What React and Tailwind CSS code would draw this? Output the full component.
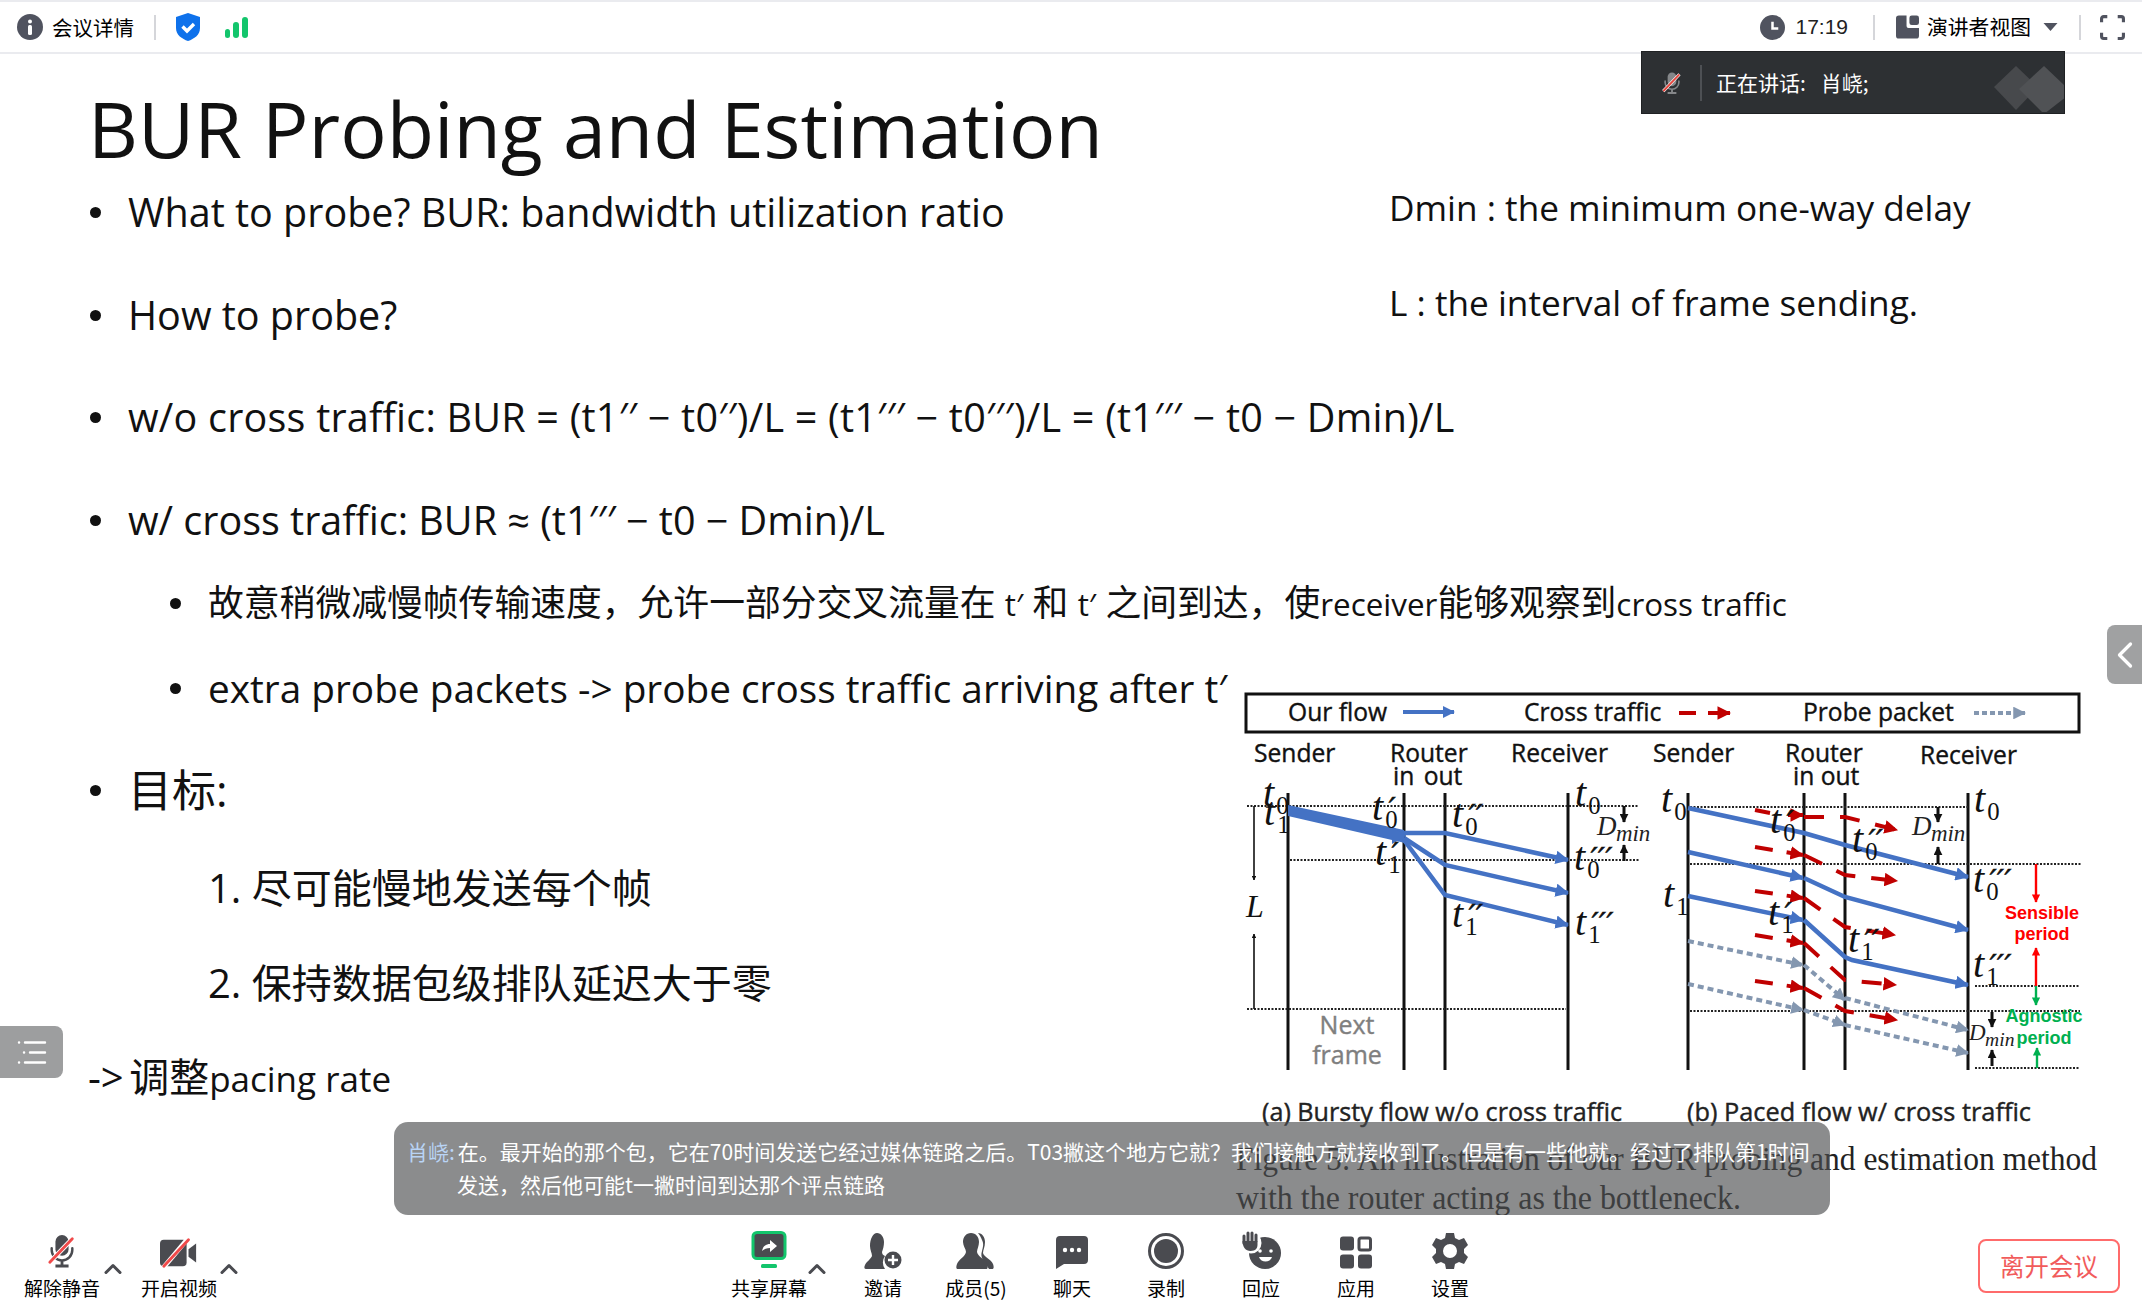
import { ChevronLeft, ChevronUp } from 'lucide-react'

const cjk = '"Noto Sans CJK SC", "Noto Sans", sans-serif'
const slideFont = '"Open Sans", "Noto Sans CJK SC", sans-serif'
const BLUE = '#4472c4'
const RED = '#c00000'
const GREY = '#8497b0'

function MicOff({ className, slash = '#f04a4a', fill = '#4a4b50' }) {
  return (
    <svg viewBox="0 0 32 36" className={className}>
      <rect x="9" y="1" width="14" height="22" rx="7" fill={fill} />
      <path d="M5 15v2a11 11 0 0 0 22 0v-2" fill="none" stroke={fill} strokeWidth="2.6" strokeLinecap="round" />
      <path d="M16 28v5M9 34h14" stroke={fill} strokeWidth="3" />
      <path d="M2 31 28 4" stroke="#fff" strokeWidth="5" />
      <path d="M3 30 27 5" stroke={slash} strokeWidth="3" strokeLinecap="round" />
    </svg>
  )
}

function ToolItem({ label, width, children }) {
  return (
    <div className="flex flex-col items-center shrink-0" style={{ width }}>
      <div className="h-[38px] flex items-end justify-center">{children}</div>
      <span className="mt-[6px] text-[19px] leading-[26px] text-black">{label}</span>
    </div>
  )
}

function Caret() {
  return <ChevronUp className="w-[28px] h-[28px] text-[#4a4b50] mt-[6px] -ml-[11px] mr-[5px] shrink-0" strokeWidth={2.6} />
}

// t with its subscript and prime marks, as in the paper figure
function Tee({ x, y, sub, primes = '', size = 40 }) {
  return (
    <g fontFamily='"Liberation Serif", serif' fill="#111">
      <text x={x} y={y} fontSize={size} fontStyle="italic">t</text>
      <text x={x + size * 0.33} y={y + 8} fontSize={size * 0.62}>{sub}</text>
      {primes && (
        <text
          x={x + size * 0.42}
          y={y - 1}
          fontSize="30"
          fontStyle="italic"
          fontFamily='"DejaVu Sans", sans-serif'
          letterSpacing="0.5"
          stroke="#111"
          strokeWidth="0.6"
        >
          {primes}
        </text>
      )}
    </g>
  )
}

function Dmin({ x, y, size = 27 }) {
  return (
    <g fontFamily='"Liberation Serif", serif' fontStyle="italic" fill="#222">
      <text x={x} y={y} fontSize={size}>D</text>
      <text x={x + size * 0.7} y={y + 6} fontSize={size * 0.85}>min</text>
    </g>
  )
}

function Flow({ d, color = BLUE, width = 4.5, dash, head = 'blue' }) {
  return (
    <path
      d={d}
      fill="none"
      stroke={color}
      strokeWidth={width}
      strokeDasharray={dash}
      markerEnd={head ? `url(#${head})` : undefined}
    />
  )
}

function Dotted({ x1, x2, y }) {
  return <line x1={x1} x2={x2} y1={y} y2={y} stroke="#222" strokeWidth="1.8" strokeDasharray="2 1.5" />
}

function Head({ id, color, size = 3 }) {
  return (
    <marker id={id} viewBox="0 0 5 5" markerWidth={size} markerHeight={size} refX="4.6" refY="2.5" orient="auto">
      <path d="M0 0 5 2.5 0 5z" fill={color} />
    </marker>
  )
}

function Figure() {
  const rails = [1288, 1404, 1445, 1568, 1688, 1804, 1845, 1968]
  const labelFont = '"Open Sans", sans-serif'
  return (
    <svg viewBox="1230 680 880 550" className="w-[880px] h-[550px] block">
      <defs>
        <Head id="blue" color={BLUE} />
        <Head id="red" color={RED} size={3.4} />
        <Head id="grey" color={GREY} size={3.2} />
        <Head id="blk" color="#111" size={3} />
        <Head id="sred" color="#ff0000" size={3.4} />
        <Head id="sgreen" color="#00b050" size={3.4} />
      </defs>

      <rect x="1246" y="694" width="833" height="38" fill="#fff" stroke="#111" strokeWidth="3" />
      <g fontFamily={labelFont} fontSize="24.6" fill="#111" stroke="#111" strokeWidth="0.4">
        <text x="1288" y="721">Our flow</text>
        <text x="1524" y="721">Cross traffic</text>
        <text x="1803" y="721">Probe packet</text>
        <text x="1254" y="762">Sender</text>
        <text x="1390" y="762">Router</text>
        <text x="1393" y="785" wordSpacing="3">in out</text>
        <text x="1511" y="762">Receiver</text>
        <text x="1653" y="762">Sender</text>
        <text x="1785" y="762">Router</text>
        <text x="1793" y="785">in out</text>
        <text x="1920" y="764">Receiver</text>
      </g>
      <Flow d="M1403 712H1454" width="4" />
      <Flow d="M1679 713H1696" color={RED} width="4" head={null} />
      <Flow d="M1708 713H1730" color={RED} width="4" head="red" />
      <Flow d="M1974 713H2025" color={GREY} width="4" dash="5 3" head="grey" />

      {rails.map((x) => (
        <line key={x} x1={x} x2={x} y1="793" y2="1070" stroke="#111" strokeWidth="3" />
      ))}

      <Dotted x1={1247} x2={1638} y={806} />
      <Dotted x1={1290} x2={1640} y={860} />
      <Dotted x1={1247} x2={1566} y={1009} />
      <Dotted x1={1690} x2={1968} y={807} />
      <Dotted x1={1690} x2={2081} y={864} />
      <Dotted x1={1975} x2={2080} y={986} />
      <Dotted x1={1690} x2={2080} y={1011} />
      <Dotted x1={1975} x2={2080} y={1068} />

      {/* bursty flow */}
      <line x1="1254" x2="1254" y1="806" y2="880" stroke="#111" strokeWidth="1.6" markerEnd="url(#blk)" />
      <line x1="1254" x2="1254" y1="1009" y2="934" stroke="#111" strokeWidth="1.6" markerEnd="url(#blk)" />
      <text x="1246" y="917" fontFamily='"Liberation Serif", serif' fontStyle="italic" fontSize="32" fill="#111">L</text>
      <path d="M1288 805 1404 830 1405 843 1288 816z" fill={BLUE} />
      <path d="M1392 826 1406 836 1392 844z" fill={BLUE} />
      <Flow d="M1404 833H1445L1568 860" />
      <Flow d="M1404 838 1445 865 1568 893" />
      <Flow d="M1404 840 1445 895 1568 925" />
      <Tee x={1263} y={806} sub="0" />
      <Tee x={1264} y={825} sub="1" />
      <Tee x={1372} y={820} sub="0" primes="′" />
      <Tee x={1375} y={865} sub="1" primes="′" />
      <Tee x={1452} y={827} sub="0" primes="′′" />
      <Tee x={1452} y={927} sub="1" primes="′′" />
      <Tee x={1575} y={806} sub="0" />
      <Tee x={1574} y={870} sub="0" primes="′′′" />
      <Tee x={1575} y={935} sub="1" primes="′′′" />
      <Dmin x={1597} y={835} />
      <line x1="1624" x2="1624" y1="806" y2="822" stroke="#111" strokeWidth="3" markerEnd="url(#blk)" />
      <line x1="1624" x2="1624" y1="861" y2="845" stroke="#111" strokeWidth="3" markerEnd="url(#blk)" />
      <g fontFamily={labelFont} fontSize="25" fill="#7f7f7f" stroke="#7f7f7f" strokeWidth="0.4" textAnchor="middle">
        <text x="1347" y="1034">Next</text>
        <text x="1347" y="1064">frame</text>
      </g>

      {/* paced flow: cross traffic first, it runs under the blue */}
      <Flow d="M1755 810 1770 813" color={RED} width="4" head={null} />
      <Flow d="M1788 815H1803" color={RED} width="4" head="red" />
      <Flow d="M1804 817H1845L1897 830" color={RED} width="4" dash="20 16" head="red" />
      <Flow d="M1755 847 1803 855" color={RED} width="4" dash="18 14" head="red" />
      <Flow d="M1804 855 1845 875 1897 881" color={RED} width="4" dash="20 16" head="red" />
      <Flow d="M1755 891 1803 898" color={RED} width="4" dash="18 14" head="red" />
      <Flow d="M1804 898 1845 927 1895 935" color={RED} width="4" dash="20 16" head="red" />
      <Flow d="M1755 935 1803 943" color={RED} width="4" dash="18 14" head="red" />
      <Flow d="M1804 943 1845 980 1896 985" color={RED} width="4" dash="20 16" head="red" />
      <Flow d="M1755 981 1803 988" color={RED} width="4" dash="18 14" head="red" />
      <Flow d="M1804 988 1845 1011 1897 1020" color={RED} width="4" dash="20 16" head="red" />

      <Flow d="M1688 808 1804 833 1845 845 1968 877" />
      <Flow d="M1688 852 1803 878" />
      <Flow d="M1804 878 1845 897 1968 930" />
      <Flow d="M1688 896 1803 920" />
      <Flow d="M1804 920 1845 957 1852 960 1968 985" />
      <Flow d="M1688 941 1803 965" color={GREY} width="4" dash="6 4" head="grey" />
      <Flow d="M1804 965 1845 1000" color={GREY} width="4" dash="6 4" head="grey" />
      <Flow d="M1845 998 1968 1030" color={GREY} width="4" dash="6 4" head="grey" />
      <Flow d="M1688 984 1803 1010" color={GREY} width="4" dash="6 4" head="grey" />
      <Flow d="M1804 1010 1845 1025" color={GREY} width="4" dash="6 4" head="grey" />
      <Flow d="M1845 1025 1968 1053" color={GREY} width="4" dash="6 4" head="grey" />

      <Tee x={1661} y={812} sub="0" />
      <Tee x={1663} y={907} sub="1" />
      <Tee x={1770} y={833} sub="0" primes="′" />
      <Tee x={1768} y={925} sub="1" primes="′" />
      <Tee x={1852} y={852} sub="0" primes="′′" />
      <Tee x={1848} y={952} sub="1" primes="′′" />
      <Tee x={1974} y={812} sub="0" />
      <Tee x={1973} y={892} sub="0" primes="′′′" />
      <Tee x={1973} y={977} sub="1" primes="′′′" />
      <Dmin x={1912} y={835} />
      <Dmin x={1969} y={1040} size={23} />
      <line x1="1938" x2="1938" y1="807" y2="822" stroke="#111" strokeWidth="3" markerEnd="url(#blk)" />
      <line x1="1938" x2="1938" y1="864" y2="847" stroke="#111" strokeWidth="3" markerEnd="url(#blk)" />
      <line x1="1992" x2="1992" y1="1012" y2="1027" stroke="#111" strokeWidth="3" markerEnd="url(#blk)" />
      <line x1="1992" x2="1992" y1="1066" y2="1050" stroke="#111" strokeWidth="3" markerEnd="url(#blk)" />

      <line x1="2036" x2="2036" y1="864" y2="902" stroke="#ff0000" strokeWidth="2.4" markerEnd="url(#sred)" />
      <line x1="2036" x2="2036" y1="986" y2="948" stroke="#ff0000" strokeWidth="2.4" markerEnd="url(#sred)" />
      <line x1="2036" x2="2036" y1="986" y2="1005" stroke="#00b050" strokeWidth="2.4" markerEnd="url(#sgreen)" />
      <line x1="2037" x2="2037" y1="1068" y2="1048" stroke="#00b050" strokeWidth="2.4" markerEnd="url(#sgreen)" />
      <g fontFamily='"Liberation Sans", sans-serif' fontSize="18" fontWeight="700" textAnchor="middle">
        <text x="2042" y="919" fill="#ff0000">Sensible</text>
        <text x="2042" y="940" fill="#ff0000">period</text>
        <text x="2044" y="1022" fill="#00b050">Agnostic</text>
        <text x="2044" y="1044" fill="#00b050">period</text>
      </g>

      <g fontFamily={labelFont} fontSize="24.6" fill="#222" stroke="#222" strokeWidth="0.4">
        <text x="1262" y="1121" textLength="360" lengthAdjust="spacingAndGlyphs">(a) Bursty flow w/o cross traffic</text>
        <text x="1687" y="1121" textLength="344" lengthAdjust="spacingAndGlyphs">(b) Paced flow w/ cross traffic</text>
      </g>
      <g fontFamily='"Liberation Serif", serif' fontSize="33.5" fill="#222">
        <text x="1236" y="1170" textLength="861" lengthAdjust="spacingAndGlyphs">Figure 5: An illustration of our BUR probing and estimation method</text>
        <text x="1236" y="1209" textLength="505" lengthAdjust="spacingAndGlyphs">with the router acting as the bottleneck.</text>
      </g>
    </svg>
  )
}

function Bullet({ children, className = '' }) {
  return (
    <div className={`flex items-center whitespace-nowrap ${className}`}>
      <span className="w-[11px] h-[11px] rounded-full bg-[#111] ml-[2px] mr-[27px] shrink-0" />
      <span>{children}</span>
    </div>
  )
}

export default function App() {
  return (
    <div className="relative w-[2142px] h-[1311px] overflow-hidden bg-white" style={{ fontFamily: cjk }}>
      {/* top bar */}
      <header className="h-[54px] flex items-center border-t-2 border-b-2 border-[#eaebef] text-[20.5px] text-black">
        <div className="flex items-center pl-[17px]">
          <svg viewBox="0 0 26 26" className="w-[26px] h-[26px] mr-[9px]">
            <circle cx="13" cy="13" r="13" fill="#50535f" />
            <circle cx="13" cy="7.5" r="2" fill="#fff" />
            <rect x="11" y="11" width="4" height="10" rx="1.5" fill="#fff" />
          </svg>
          <span>会议详情</span>
          <div className="w-[2px] h-[25px] bg-[#d5d6da] ml-[20px] mr-[19px]" />
          <svg viewBox="0 0 26 28" className="w-[26px] h-[28px]">
            <path d="M13 0 25 4v11c0 7-6 11-12 13C7 26 1 22 1 15V4z" fill="#0e71eb" />
            <path d="M7.5 13.5 12 18l7-7" fill="none" stroke="#fff" strokeWidth="3.4" />
          </svg>
          <div className="ml-[24px] flex items-end gap-[3px] h-[22px]">
            <div className="w-[5px] h-[9px] rounded-full bg-[#13c56c]" />
            <div className="w-[6px] h-[16px] rounded-full bg-[#13c56c]" />
            <div className="w-[6px] h-[21px] rounded-full bg-[#13c56c]" />
          </div>
        </div>
        <div className="ml-auto flex items-center pr-[17px]">
          <svg viewBox="0 0 26 26" className="w-[25px] h-[25px] mr-[10px]">
            <circle cx="13" cy="13" r="13" fill="#50535f" />
            <path d="M13 7v7h6" fill="none" stroke="#fff" strokeWidth="2.6" />
          </svg>
          <span className="text-[#222] text-[21px]" style={{ fontFamily: '"Liberation Sans", sans-serif' }}>17:19</span>
          <div className="w-[2px] h-[25px] bg-[#d5d6da] ml-[25px] mr-[21px]" />
          <svg viewBox="0 0 24 24" className="w-[23px] h-[24px] mr-[8px]">
            <path d="M3 0h8v11a2 2 0 0 0 2 2h11v8a3 3 0 0 1-3 3H3a3 3 0 0 1-3-3V3a3 3 0 0 1 3-3z" fill="#50535f" />
            <rect x="14" y="0" width="10" height="10" rx="2.5" fill="#50535f" />
          </svg>
          <span className="text-[20.8px]">演讲者视图</span>
          <svg viewBox="0 0 14 8" className="w-[15px] h-[8px] ml-[12px]">
            <path d="M0 0h14L7 8z" fill="#50535f" />
          </svg>
          <div className="w-[2px] h-[25px] bg-[#d5d6da] ml-[21px] mr-[19px]" />
          <svg viewBox="0 0 24 24" className="w-[25px] h-[25px]" fill="none" stroke="#50535f" strokeWidth="3">
            <path d="M1.5 7V3.5a2 2 0 0 1 2-2H7M17 1.5h3.5a2 2 0 0 1 2 2V7M22.5 17v3.5a2 2 0 0 1-2 2H17M7 22.5H3.5a2 2 0 0 1-2-2V17" />
          </svg>
        </div>
      </header>

      {/* shared slide */}
      <main className="grid grid-cols-[1230px_880px] h-[1161px] text-[#111]" style={{ fontFamily: slideFont }}>
        <div className="pl-[88px] pt-[29px] text-[39.5px] leading-[56px]">
          <h1 className="text-[77.3px] leading-[90px] whitespace-nowrap">BUR Probing and Estimation</h1>
          <Bullet className="mt-[11px]">What to probe? BUR: bandwidth utilization ratio</Bullet>
          <Bullet className="mt-[47px]">How to probe?</Bullet>
          <Bullet className="mt-[46px] tracking-[0.23px]">w/o cross traffic: BUR = (t1′′ − t0′′)/L = (t1′′′ − t0′′′)/L = (t1′′′ − t0 − Dmin)/L</Bullet>
          <Bullet className="mt-[47px]">w/ cross traffic: BUR ≈ (t1′′′ − t0 − Dmin)/L</Bullet>
          <Bullet className="mt-[26px] ml-[80px] text-[35.8px]">
            故意稍微减慢帧传输速度，允许一部分交叉流量在 <span className="text-[31.4px]">t′</span> 和 <span className="text-[31.4px]">t′</span> 之间到达，使<span className="text-[31.4px]">receiver</span>能够观察到<span className="text-[31.4px]">cross traffic</span>
          </Bullet>
          <Bullet className="mt-[28px] ml-[80px] text-[38.75px]">extra probe packets -&gt; probe cross traffic arriving after t′</Bullet>
          <Bullet className="mt-[46px] text-[44px]">目标:</Bullet>
          <div className="mt-[42px] pl-[120px] text-[40px] whitespace-nowrap">1. 尽可能慢地发送每个帧</div>
          <div className="mt-[39px] pl-[120px] text-[40px] whitespace-nowrap">2. 保持数据包级排队延迟大于零</div>
          <div className="mt-[38px] text-[40px] whitespace-nowrap">
            -&gt; <span className="-ml-[5px]">调整</span><span className="text-[35px]">pacing rate</span>
          </div>
        </div>
        <div className="relative">
          <div className="pl-[159px] pt-[128px] text-[35.2px] leading-[50px] whitespace-nowrap">
            <p>Dmin : the minimum one-way delay</p>
            <p className="mt-[45px]">L : the interval of frame sending.</p>
          </div>
          <div className="absolute left-0 top-[626px]">
            <Figure />
          </div>
        </div>
      </main>

      {/* toolbar */}
      <footer className="absolute left-0 right-0 bottom-0 h-[96px] flex items-start pt-[16px] bg-white" style={{ fontFamily: cjk }}>
        <div className="flex items-center pl-[14px]">
          <ToolItem label="解除静音" width={96}>
            <MicOff className="w-[30px] h-[36px]" />
          </ToolItem>
          <Caret />
          <ToolItem label="开启视频" width={94}>
            <svg viewBox="0 0 40 32" className="w-[38px] h-[32px]">
              <rect x="0" y="2" width="28" height="28" rx="4" fill="#4a4b50" />
              <path d="M30 12 38 6v20l-8-6z" fill="#4a4b50" />
              <path d="M3 32 30 0" stroke="#fff" strokeWidth="5" />
              <path d="M4 30 30 2" stroke="#f04a4a" strokeWidth="3" strokeLinecap="round" />
            </svg>
          </ToolItem>
          <Caret />
        </div>
        <div className="flex items-center ml-[476px]">
          <ToolItem label="共享屏幕" width={90}>
            <svg viewBox="0 0 36 38" className="w-[36px] h-[38px]">
              <rect x="2" y="1.5" width="32" height="26" rx="4" fill="#4a4b50" stroke="#13c56c" strokeWidth="3" />
              <path d="M11 20c1-5 4-7 8-7V9l7 6-7 6v-4c-3 0-6 1-8 3z" fill="#fff" />
              <rect x="10" y="33" width="16" height="4" rx="1.5" fill="#13c56c" />
            </svg>
          </ToolItem>
          <Caret />
          <ToolItem label="邀请" width={94}>
            <svg viewBox="0 0 38 36" className="w-[38px] h-[36px]">
              <path d="M13 0c4 0 7 4 7 9 0 4-1 7-2 10 0 2 1 3 3 4a11 11 0 0 0 0 13H2c-2 0-2-2-1-4 2-4 6-6 7-9 0-3-2-6-2-10 0-7 3-13 7-13z" fill="#4a4b50" />
              <circle cx="29" cy="27" r="8.5" fill="#4a4b50" />
              <path d="M29 22v10M24 27h10" stroke="#fff" strokeWidth="2.4" />
            </svg>
          </ToolItem>
          <ToolItem label="成员(5)" width={92}>
            <svg viewBox="0 0 40 36" className="w-[40px] h-[36px]">
              <path d="M22 0c4 0 7 4 7 9 0 5-2 8-2 11 1 4 8 6 10 11 1 3 1 5-1 5h-3l-6-9c-2-3-2-6-1-9 1-4 2-7 0-11-1-2-2-5-4-7z" fill="#4a4b50" />
              <path d="M15 0c5 0 8 4 8 9 0 4-2 7-2 10 1 5 8 7 10 12 1 3 1 5-1 5H2c-2 0-2-2-1-5 2-5 8-7 9-12 0-3-3-6-3-10 0-5 3-9 8-9z" fill="#4a4b50" />
            </svg>
          </ToolItem>
          <ToolItem label="聊天" width={100}>
            <svg viewBox="0 0 32 33" className="w-[32px] h-[33px]">
              <path d="M4 0h24a4 4 0 0 1 4 4v20a4 4 0 0 1-4 4H8l-8 5V4a4 4 0 0 1 4-4z" fill="#4a4b50" />
              <circle cx="9" cy="14" r="2.2" fill="#fff" />
              <circle cx="16" cy="14" r="2.2" fill="#fff" />
              <circle cx="23" cy="14" r="2.2" fill="#fff" />
            </svg>
          </ToolItem>
          <ToolItem label="录制" width={88}>
            <svg viewBox="0 0 36 36" className="w-[36px] h-[36px]">
              <circle cx="18" cy="18" r="16.5" fill="none" stroke="#4a4b50" strokeWidth="3" />
              <circle cx="18" cy="18" r="12" fill="#4a4b50" />
            </svg>
          </ToolItem>
          <ToolItem label="回应" width={102}>
            <svg viewBox="0 0 40 38" className="w-[40px] h-[38px]">
              <circle cx="24" cy="22" r="16" fill="#4a4b50" />
              <circle cx="10" cy="12" r="10.5" fill="#fff" />
              <path d="M3 12V5M7 10V2M11 10V2M15 10V4" stroke="#4a4b50" strokeWidth="3" strokeLinecap="round" />
              <path d="M1.5 10h15v4c0 3-2 6-7 6s-8-4-8-10z" fill="#4a4b50" />
              <circle cx="19" cy="20" r="1.8" fill="#fff" />
              <circle cx="30" cy="20" r="1.8" fill="#fff" />
              <path d="M18 26c2 6 11 6 13 0z" fill="#fff" />
            </svg>
          </ToolItem>
          <ToolItem label="应用" width={88}>
            <svg viewBox="0 0 32 32" className="w-[32px] h-[33px]">
              <rect x="0" y="0" width="14" height="14" rx="3" fill="#4a4b50" />
              <rect x="19" y="1.5" width="11.5" height="12" rx="2" fill="none" stroke="#4a4b50" strokeWidth="3" />
              <rect x="0" y="18" width="14" height="14" rx="3" fill="#4a4b50" />
              <rect x="18" y="18" width="14" height="14" rx="3" fill="#4a4b50" />
            </svg>
          </ToolItem>
          <ToolItem label="设置" width={100}>
            <svg viewBox="0 0 36 36" className="w-[36px] h-[36px]">
              <path fillRule="evenodd" d="M14 0h8l1 5 4 2 5-2 4 7-4 4v4l4 4-4 7-5-2-4 2-1 5h-8l-1-5-4-2-5 2-4-7 4-4v-4L0 12l4-7 5 2 4-2zM18 11a7 7 0 1 0 0 14 7 7 0 0 0 0-14z" fill="#4a4b50" />
            </svg>
          </ToolItem>
        </div>
        <button className="ml-auto mr-[22px] mt-[8px] w-[142px] h-[54px] rounded-lg border-2 border-[#ff6b6b] text-[24.5px] text-[#f15b5b] bg-white">
          离开会议
        </button>
      </footer>

      {/* overlays on the slide */}
      <div className="absolute left-[1641px] top-[51px] w-[424px] h-[63px] overflow-hidden flex items-center bg-[#2d3033] border border-[#1f2123]">
        <MicOff className="w-[20px] h-[26px] ml-[20px]" fill="#85878a" slash="#e5473f" />
        <div className="w-[2px] h-[36px] bg-[#4d5054] ml-[18px] mr-[14px]" />
        <span className="text-[21px] text-white">正在讲话:</span>
        <span className="text-[21px] text-white ml-[15px]">肖峣;</span>
        <svg viewBox="0 0 70 50" className="absolute right-0 top-[10px] w-[70px] h-[50px]">
          <path d="M0 25 22 4 44 25 22 48z" fill="#47494c" />
          <path d="M25 27 50 4 72 25 72 35 50 52z" fill="#505255" />
        </svg>
      </div>

      <div className="absolute left-[394px] top-[1122px] w-[1436px] h-[93px] rounded-[14px] bg-[#4d4e50]/65 text-[21px] leading-[33px] text-white pl-[13px] pt-[13px] whitespace-nowrap">
        <div>
          <span className="text-[#b9d4f5]">肖峣:</span><span className="ml-[3px]">在。最开始的那个包，它在70时间发送它经过媒体链路之后。T03撇这个地方它就？我们接触方就接收到了。但是有一些他就。经过了排队第1时间</span>
        </div>
        <div className="pl-[50px]">发送，然后他可能t一撇时间到达那个评点链路</div>
      </div>

      <div className="absolute left-0 top-[1026px] w-[63px] h-[52px] rounded-r-lg bg-[#9d9e9f] flex items-center justify-center">
        <svg viewBox="0 0 30 24" className="w-[30px] h-[24px]" stroke="#fff" strokeWidth="2.4" strokeLinecap="round">
          <path d="M2 2.5h.1M8 2.5h20M7 12.5h.1M13 12.5h15M2 22.5h.1M8 22.5h20" />
        </svg>
      </div>

      <div className="absolute right-0 top-[625px] w-[35px] h-[59px] rounded-l-lg bg-[#a0a1a2] flex items-center justify-center">
        <ChevronLeft className="w-[44px] h-[44px] shrink-0 text-white" strokeWidth={1.8} />
      </div>
    </div>
  )
}
